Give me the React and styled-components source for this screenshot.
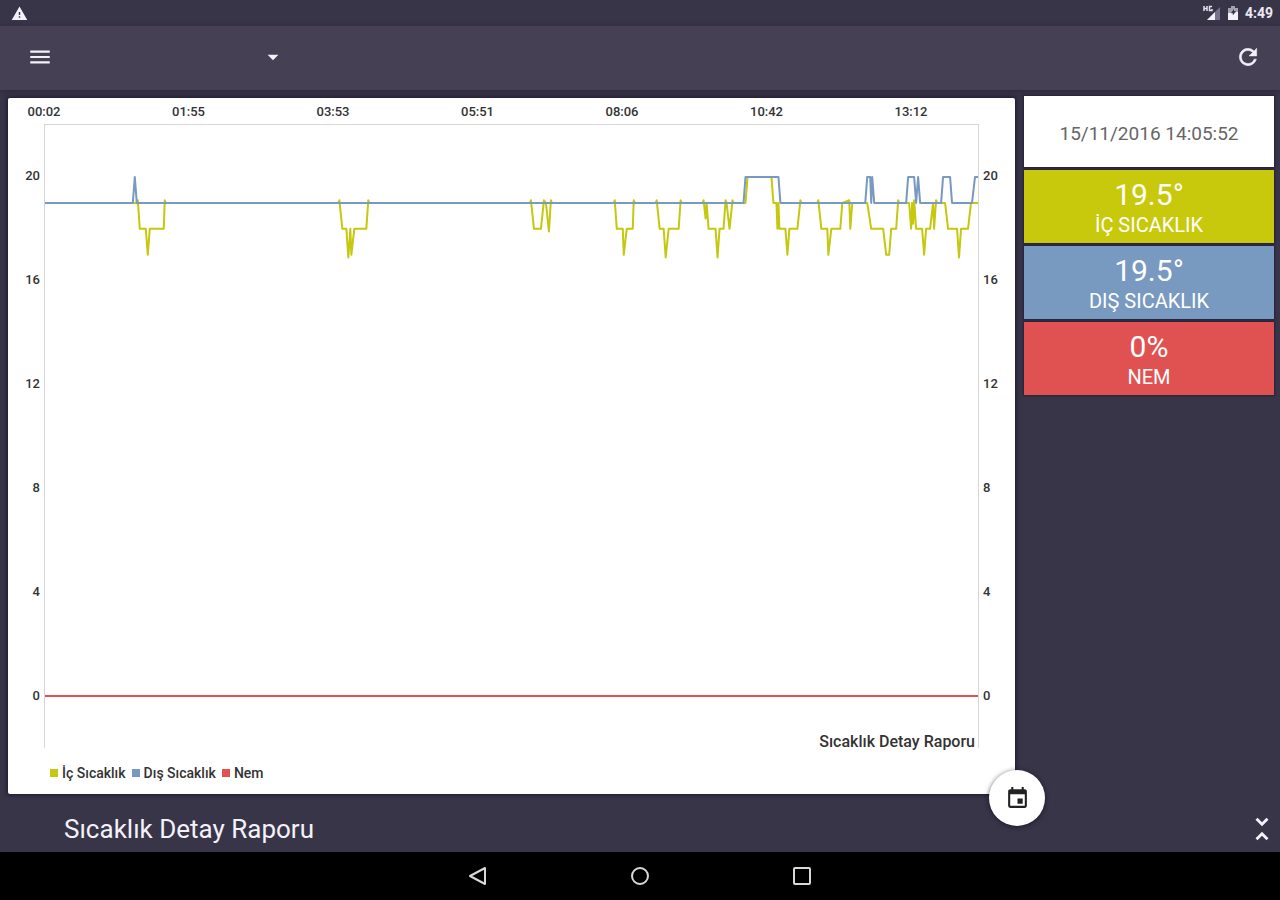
import React from "react";
import styled, { createGlobalStyle } from "styled-components";
import { MdMenu, MdEvent, MdUnfoldLess, MdWarning, MdArrowDropDown } from "react-icons/md";

const GlobalStyle = createGlobalStyle`
  *, *::before, *::after { box-sizing: border-box; }
  body {
    margin: 0;
    background: #393548;
    font-family: Roboto, "Liberation Sans", sans-serif;
    color: #fff;
  }
  button { font: inherit; }
`;

const Screen = styled.div`
  min-height: 100vh;
  display: flex;
  flex-direction: column;
`;

const StatusBar = styled.div`
  height: 26px;
  padding: 0 7px 0 11px;
  display: flex;
  align-items: center;
  justify-content: space-between;
  background: #393548;
`;

const StatusIcons = styled.div`
  display: flex;
  align-items: center;
  gap: 7px;
`;

const Clock = styled.span`
  font-size: 14px;
  line-height: 16px;
  font-weight: 700;
  color: #ece9f2;
`;

const Toolbar = styled.header`
  height: 64px;
  padding: 0 19px 2px 27px;
  display: flex;
  align-items: center;
  background: #454053;
  box-shadow: 0 1px 5px rgba(30, 24, 48, 0.5);
`;

const IconButton = styled.button`
  display: grid;
  place-items: center;
  width: ${(p) => p.$size}px;
  height: ${(p) => p.$size}px;
  margin: 0;
  padding: 0;
  border: 0;
  background: none;
  color: #f3f1fa;
  cursor: pointer;
`;

const Picker = styled.label`
  display: grid;
  grid-template-columns: 1fr 28px;
  align-items: center;
  width: 230px;
  height: 40px;
  margin: 0 auto 0 4px;

  svg {
    grid-area: 1 / 2;
    justify-self: center;
    pointer-events: none;
  }
`;

const PickerSelect = styled.select`
  grid-area: 1 / 1 / 2 / 3;
  width: 100%;
  height: 40px;
  border: 0;
  appearance: none;
  background: none;
  color: #fff;
  font: inherit;
`;

const Body = styled.main`
  flex: 1;
  display: flex;
  gap: 9px;
  padding: 6px 6px 0 8px;
`;

const ChartCard = styled.section`
  position: relative;
  flex: 1;
  min-width: 0;
  display: flex;
  flex-direction: column;
  margin-top: 2px;
  padding: 6px 0 13px;
  border-radius: 2px;
  background: #fff;
  color: #333;
  box-shadow: 0 0 4px 1px #1c1730;
`;

const ChartGrid = styled.div`
  flex: 1;
  display: grid;
  grid-template-columns: 36px 1fr 36px;
  grid-template-rows: 20px 1fr;
`;

const TimeAxis = styled.div`
  grid-area: 1 / 2;
  display: flex;
  justify-content: space-between;
  padding-right: 68px;
`;

const TimeLabel = styled.span`
  width: 40px;
  margin: 0 -20px;
  text-align: center;
  font-size: 13px;
  line-height: 16px;
  font-weight: 500;
`;

const ValueAxis = styled.div`
  grid-area: 2 / ${(p) => (p.$side === "left" ? 1 : 3)};
  display: grid;
  grid-auto-rows: 1fr;
  align-items: center;
  padding: 0 4px;
  text-align: ${(p) => (p.$side === "left" ? "right" : "left")};
  font-size: 13px;
  line-height: 16px;
  font-weight: 500;
`;

const Plot = styled.div`
  grid-area: 2 / 2;
  display: grid;
  border: 1px solid #d6d6d6;
  border-bottom: 0;

  svg {
    grid-area: 1 / 1;
    width: 100%;
    height: 100%;
    min-height: 0;
  }
`;

const Line = styled.polyline`
  fill: none;
  stroke: ${(p) => p.$color};
  stroke-width: 2px;
  stroke-linejoin: round;
  vector-effect: non-scaling-stroke;
`;

const PlotTitle = styled.span`
  grid-area: 1 / 1;
  align-self: end;
  justify-self: end;
  padding-right: 3px;
  font-size: 16px;
  line-height: 12px;
  font-weight: 500;
`;

const Legend = styled.ul`
  display: flex;
  gap: 6px;
  margin: 17px 0 0;
  padding: 0 0 0 42px;
  list-style: none;
`;

const LegendItem = styled.li`
  display: flex;
  align-items: center;
  gap: 4px;
  font-size: 14px;
  line-height: 16px;
  font-weight: 500;

  &::before {
    content: "";
    width: 8px;
    height: 8px;
    background: ${(p) => p.$color};
  }
`;

const Fab = styled.button`
  position: absolute;
  right: -30px;
  bottom: -32px;
  width: 56px;
  height: 56px;
  display: grid;
  place-items: center;
  padding: 0;
  border: 0;
  border-radius: 50%;
  background: #fff;
  color: #222;
  box-shadow: 0 1px 5px rgba(15, 10, 30, 0.7);
  cursor: pointer;
`;

const Side = styled.aside`
  width: 250px;
  display: flex;
  flex-direction: column;
  gap: 3px;
`;

const Tile = styled.div`
  height: 73px;
  padding-top: 4px;
  display: flex;
  flex-direction: column;
  align-items: center;
  justify-content: center;
  background: ${(p) => p.$color};
  box-shadow: 0 0 2px 1px #26203a;
`;

const DateTile = styled(Tile)`
  height: 71px;
`;

const DateText = styled.time`
  font-size: 19px;
  line-height: 24px;
  color: #666;
`;

const Reading = styled.strong`
  font-size: 30px;
  line-height: 32px;
  font-weight: 400;
`;

const ReadingName = styled.span`
  font-size: 20px;
  line-height: 28px;
`;

const BottomBar = styled.footer`
  height: 58px;
  display: flex;
  align-items: center;
  justify-content: space-between;
  padding: 11px 1px 0 64px;
`;

const Title = styled.h1`
  margin: 0;
  font-size: 26px;
  line-height: 32px;
  font-weight: 400;
  color: #f3f1fa;
`;

const NavBar = styled.nav`
  height: 48px;
  display: flex;
  align-items: center;
  justify-content: center;
  gap: 114px;
  background: #000;
`;

const COLORS = { inside: "#c5c80e", outside: "#7899c0", humidity: "#e05252" };

// Each point is [horizontal position in the plot, value].
const INSIDE = [
  [0, 19], [92, 19], [93, 19.1], [95, 18], [101, 18], [103, 17], [105, 18], [119, 18], [120, 19.1], [121, 19],
  [294, 19], [295, 19.1], [298, 18], [302, 18], [304, 16.9], [306, 18], [307, 17], [310, 18], [322, 18], [324, 19.1], [325, 19],
  [486, 19], [487, 19.1], [490, 18], [497, 18], [500, 19.1], [502, 19], [505, 17.9], [507, 19.1], [508, 19],
  [570, 19], [571, 19.1], [573, 18], [579, 18], [580, 17], [583, 18], [589, 18], [590, 19.1], [591, 19],
  [612, 19], [613, 19.1], [616, 18], [620, 18], [622, 16.9], [625, 18], [635, 18], [637, 19.1], [638, 19],
  [659, 19], [660, 19.1], [662, 18.4], [663, 19], [665, 18], [672, 18], [674, 16.9], [676, 18], [680, 18], [682, 19.1], [683, 19], [686, 18], [689, 19.1], [690, 19],
  [702, 19], [704, 20], [728, 20], [730, 19], [733, 19], [734, 18], [735, 19], [736, 18], [742, 18], [744, 17], [746, 18], [754, 18], [757, 19.1], [758, 19],
  [774, 19], [775, 19.1], [778, 18], [784, 18], [785, 17], [788, 18], [797, 18], [799, 19], [806, 19.1], [807, 18], [809, 19],
  [824, 19], [828, 18], [840, 18], [843, 17], [846, 17], [848, 18], [853, 18], [855, 19.1], [856, 19],
  [866, 19], [868, 18], [869, 19], [870, 18.2], [871, 19.1], [873, 18], [879, 18], [881, 17], [883, 18], [887, 18], [890, 19], [891, 18], [893, 19.1], [894, 19],
  [902, 19], [905, 18], [914, 18], [916, 16.9], [918, 18], [925, 18], [928, 19], [935, 19],
];

const OUTSIDE = [
  [0, 19], [88, 19], [90, 20], [92, 19], [700, 19], [702, 20], [735, 20], [737, 19],
  [822, 19], [824, 20], [827, 20], [828, 19], [829, 20], [831, 19],
  [863, 19], [865, 20], [871, 20], [873, 19], [875, 20], [877, 19],
  [898, 19], [900, 20], [907, 20], [909, 19], [929, 19], [932, 20], [935, 20],
];

const HUMIDITY = [[0, 0], [935, 0]];

const toPoints = (data) => data.map(([x, v]) => `${x},${22 - v}`).join(" ");

const TIMES = ["00:02", "01:55", "03:53", "05:51", "08:06", "10:42", "13:12"];
const VALUES = [20, 16, 12, 8, 4, 0];

const READINGS = [
  { value: "19.5°", name: "İÇ SICAKLIK", color: "#c8c90c" },
  { value: "19.5°", name: "DIŞ SICAKLIK", color: COLORS.outside },
  { value: "0%", name: "NEM", color: COLORS.humidity },
];

function SignalIcon() {
  return (
    <svg width="18" height="16" viewBox="0 0 18 16" aria-hidden="true">
      <path d="M17 2v13H4z" fill="#77728a" />
      <path d="M12 7v8H4z" fill="#f3f1fa" />
      <path d="M1 1v5M1 3.500h3M4 1v5M9 1.500H6.500v4H9V4" stroke="#e4e1ec" strokeWidth="1.500" fill="none" />
    </svg>
  );
}

function BatteryIcon() {
  return (
    <svg width="10" height="16" viewBox="0 0 10 16" aria-hidden="true">
      <path d="M3 1h4v2h3v12H0V3h3z" fill="#a5a0b4" />
      <path d="M0 8h3l2 2 3-3h2v8H0z" fill="#f3f1fa" />
      <path d="M6 4L3 8h2v2l3-4H6z" fill="#393548" />
    </svg>
  );
}

function RefreshIcon() {
  return (
    <svg width="26" height="26" viewBox="0 0 24 24" aria-hidden="true">
      <path
        d="M17.650 6.350A7.958 7.958 0 0 0 12 4a8 8 0 1 0 7.730 10h-2.080A5.990 5.990 0 0 1 12 18a6 6 0 1 1 4.220-10.220L13 11h7V4z"
        fill="currentColor"
        stroke="currentColor"
        strokeWidth="0.500"
      />
    </svg>
  );
}

function ValueLabels({ side }) {
  return (
    <ValueAxis $side={side}>
      {VALUES.map((v) => (
        <span key={v}>{v}</span>
      ))}
    </ValueAxis>
  );
}

function NavIcon({ children }) {
  return (
    <svg width="24" height="24" viewBox="0 0 24 24" fill="none" stroke="#d8d8d8" strokeWidth="2" strokeLinejoin="round" aria-hidden="true">
      {children}
    </svg>
  );
}

export default function App() {
  return (
    <Screen>
      <GlobalStyle />
      <StatusBar>
        <MdWarning size={17} color="#f3f1fa" />
        <StatusIcons>
          <SignalIcon />
          <BatteryIcon />
          <Clock>4:49</Clock>
        </StatusIcons>
      </StatusBar>
      <Toolbar>
        <IconButton $size={26} aria-label="Menü">
          <MdMenu size={26} />
        </IconButton>
        <Picker>
          <PickerSelect aria-label="Cihaz" defaultValue="">
            <option value="" />
          </PickerSelect>
          <MdArrowDropDown size={26} color="#f3f1fa" />
        </Picker>
        <IconButton $size={26} aria-label="Yenile">
          <RefreshIcon />
        </IconButton>
      </Toolbar>
      <Body>
        <ChartCard>
          <ChartGrid>
            <TimeAxis>
              {TIMES.map((t) => (
                <TimeLabel key={t}>{t}</TimeLabel>
              ))}
            </TimeAxis>
            <ValueLabels side="left" />
            <Plot>
              <svg viewBox="0 0 935 24" preserveAspectRatio="none" role="img" aria-label="Sıcaklık">
                <Line $color={COLORS.inside} points={toPoints(INSIDE)} />
                <Line $color={COLORS.outside} points={toPoints(OUTSIDE)} />
                <Line $color={COLORS.humidity} points={toPoints(HUMIDITY)} />
              </svg>
              <PlotTitle>Sıcaklık Detay Raporu</PlotTitle>
            </Plot>
            <ValueLabels side="right" />
          </ChartGrid>
          <Legend>
            <LegendItem $color={COLORS.inside}>İç Sıcaklık</LegendItem>
            <LegendItem $color={COLORS.outside}>Dış Sıcaklık</LegendItem>
            <LegendItem $color={COLORS.humidity}>Nem</LegendItem>
          </Legend>
          <Fab aria-label="Tarih seç">
            <MdEvent size={25} />
          </Fab>
        </ChartCard>
        <Side>
          <DateTile $color="#fff">
            <DateText dateTime="2016-11-15T14:05:52">15/11/2016 14:05:52</DateText>
          </DateTile>
          {READINGS.map((r) => (
            <Tile key={r.name} $color={r.color}>
              <Reading>{r.value}</Reading>
              <ReadingName>{r.name}</ReadingName>
            </Tile>
          ))}
        </Side>
      </Body>
      <BottomBar>
        <Title>Sıcaklık Detay Raporu</Title>
        <IconButton $size={34} aria-label="Daralt">
          <MdUnfoldLess size={34} />
        </IconButton>
      </BottomBar>
      <NavBar>
        <IconButton $size={48} aria-label="Geri">
          <NavIcon>
            <path d="M19 4v16L4 12z" />
          </NavIcon>
        </IconButton>
        <IconButton $size={48} aria-label="Ana ekran">
          <NavIcon>
            <circle cx="12" cy="12" r="8" />
          </NavIcon>
        </IconButton>
        <IconButton $size={48} aria-label="Son uygulamalar">
          <NavIcon>
            <rect x="4" y="4" width="16" height="16" rx="1" />
          </NavIcon>
        </IconButton>
      </NavBar>
    </Screen>
  );
}
